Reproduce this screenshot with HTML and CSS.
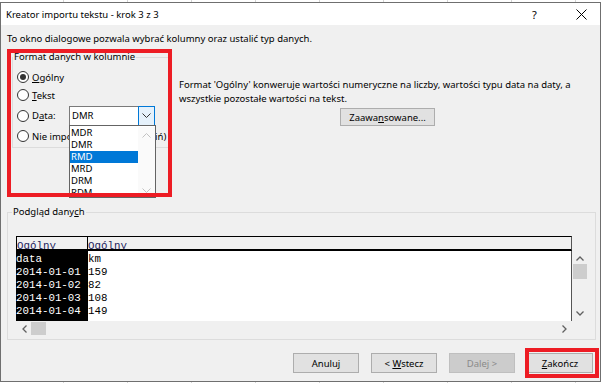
FILE: index.html
```html
<!DOCTYPE html>
<html lang="pl">
<head>
  <meta charset="UTF-8">
  <title>Kreator importu tekstu - krok 3 z 3</title>
  <link rel="stylesheet" href="styles.css">
</head>
<body>
  <div class="dialog">
    <div class="titlebar">
      <span class="title">Kreator importu tekstu - krok 3 z 3</span>
      <span class="help">?</span>
      <span class="close">
        <svg width="11" height="11" viewBox="0 0 11 11"><path d="M0.5 0.5L10.5 10.5M10.5 0.5L0.5 10.5" stroke="#000" stroke-width="1" fill="none"/></svg>
      </span>
    </div>

    <div class="content">
      <p class="intro">To okno dialogowe pozwala wybrać kolumny oraz ustalić typ danych.</p>

      <div class="top">
        <fieldset class="group format">
          <legend>Format danych w kolumnie</legend>
          <div class="row"><span class="radio on"></span><span><u>O</u>gólny</span></div>
          <div class="row"><span class="radio"></span><span><u>T</u>ekst</span></div>
          <div class="row row-data">
            <span class="radio"></span><span class="lbl-data">D<u>a</u>ta:</span>
            <div class="combo">
              <span class="combo-val">DMR</span>
              <span class="combo-btn">
                <svg width="9" height="5" viewBox="0 0 9 5"><path d="M0.5 0.5L4.5 4.5L8.5 0.5" stroke="#333" fill="none"/></svg>
              </span>
              <div class="droplist">
                <ul class="items">
                  <li>MDR</li>
                  <li>DMR</li>
                  <li class="sel">RMD</li>
                  <li>MRD</li>
                  <li>DRM</li>
                  <li>RDM</li>
                </ul>
                <div class="list-scroll">
                  <svg width="9" height="5" viewBox="0 0 9 5"><path d="M0.5 4.5L4.5 0.5L8.5 4.5" stroke="#c2c2c2" fill="none"/></svg>
                  <svg width="9" height="5" viewBox="0 0 9 5"><path d="M0.5 0.5L4.5 4.5L8.5 0.5" stroke="#c2c2c2" fill="none"/></svg>
                </div>
              </div>
            </div>
          </div>
          <div class="row"><span class="radio"></span><span>Nie importuj kolumny (pomiń)</span></div>
        </fieldset>

        <div class="info">
          <p>Format 'Ogólny' konweruje wartości numeryczne na liczby, wartości typu data na daty, a<br>wszystkie pozostałe wartości na tekst.</p>
          <button class="btn btn-adv">Zaawa<u>n</u>sowane...</button>
        </div>
      </div>

      <fieldset class="group preview">
        <legend>Podgląd dany<u>c</u>h</legend>
        <div class="sheet-wrap">
          <div class="sheet">
            <div class="sheet-head">
              <div class="hcell first">Ogólny</div>
              <div class="hcell">Ogólny</div>
            </div>
            <div class="sheet-body">
              <div class="col col-sel">
                <div>data</div>
                <div>2014-01-01</div>
                <div>2014-01-02</div>
                <div>2014-01-03</div>
                <div>2014-01-04</div>
              </div>
              <div class="col">
                <div>km</div>
                <div>159</div>
                <div>82</div>
                <div>108</div>
                <div>149</div>
              </div>
            </div>
            <div class="hscroll">
              <svg class="arr" width="5" height="8" viewBox="0 0 5 8"><path d="M4.5 0.5L1 4L4.5 7.5" stroke="#606060" stroke-width="1.3" fill="none"/></svg>
              <span class="hthumb"></span>
              <span class="spacer"></span>
              <svg class="arr" width="5" height="8" viewBox="0 0 5 8"><path d="M0.5 0.5L4 4L0.5 7.5" stroke="#606060" stroke-width="1.3" fill="none"/></svg>
            </div>
          </div>
          <div class="vscroll">
            <svg width="8" height="5" viewBox="0 0 8 5"><path d="M0.5 4.5L4 1L7.5 4.5" stroke="#606060" stroke-width="1.3" fill="none"/></svg>
            <span class="vthumb"></span>
            <span class="spacer"></span>
            <svg width="8" height="5" viewBox="0 0 8 5"><path d="M0.5 0.5L4 4L7.5 0.5" stroke="#606060" stroke-width="1.3" fill="none"/></svg>
          </div>
        </div>
      </fieldset>

      <div class="actions">
        <button class="btn">Anuluj</button>
        <button class="btn">&lt; <u>W</u>stecz</button>
        <button class="btn" disabled>Dalej &gt;</button>
        <button class="btn"><u>Z</u>akończ</button>
      </div>
    </div>

    <div class="mark mark-format"></div>
    <div class="mark mark-finish"></div>
  </div>
</body>
</html>
```

FILE: styles.css
```css
* {
  box-sizing: border-box;
}
body {
  margin: 0;
  background-color: #fff;
  background-image: linear-gradient(90deg, transparent 63px, #d4d4d4 63px);
  background-size: 64px 100%;
  font-family: "Noto Sans", "Liberation Sans", sans-serif;
  font-size: 9.5px;
  color: #000;
}
.dialog {
  position: relative;
  margin-top: 2px;
  width: 601px;
  height: 380px;
  border: 1px solid #6f6f6f;
  background: #f0f0f0;
}
.titlebar {
  height: 22px;
  background: #fff;
  display: flex;
  align-items: center;
  padding-left: 5px;
}
.title {
  flex: 1;
}
.help {
  width: 44px;
  font-size: 11px;
}
.close {
  width: 24px;
  display: flex;
}
.content {
  padding: 0 4px 0 6px;
}
.intro {
  margin: 8px 0 0;
  line-height: 12px;
}
.top {
  display: flex;
  align-items: flex-start;
  margin-top: 6px;
}
.group {
  margin: 0;
  border: 1px solid #dcdcdc;
  min-width: 0;
}
.group legend {
  line-height: 12px;
  padding: 0 1px;
}
.format {
  margin-left: 5px;
  width: 158px;
  padding: 5px 4px 2px;
}
.format legend {
  margin-left: -4px;
}
.row {
  display: flex;
  align-items: center;
  height: 18px;
  white-space: nowrap;
}
.row-data {
  height: 23px;
}
.radio {
  width: 12px;
  height: 12px;
  border: 1px solid #333;
  border-radius: 50%;
  background: #fff;
  margin-right: 3px;
  display: flex;
  flex-shrink: 0;
}
.radio.on::after {
  content: "";
  width: 6px;
  height: 6px;
  margin: auto;
  border-radius: 50%;
  background: #333;
}
.lbl-data {
  width: 37px;
}
.combo {
  position: relative;
  width: 86px;
  height: 20px;
  border: 1px solid #7a7a7a;
  background: #fff;
  display: flex;
}
.combo-val {
  flex: 1;
  padding-left: 2px;
  line-height: 18px;
}
.combo-btn {
  width: 17px;
  margin: -1px -1px -1px 0;
  border: 1px solid #0078d7;
  background: #e5f1fb;
  display: flex;
  align-items: center;
  justify-content: center;
}
.droplist {
  position: absolute;
  top: 100%;
  left: -1px;
  width: 87px;
  height: 73px;
  padding-top: 1px;
  border: 1px solid #646464;
  background: #fff;
  display: flex;
  overflow: hidden;
  z-index: 2;
}
.items {
  list-style: none;
  margin: 0;
  padding: 0;
  flex: 1;
}
.items li {
  line-height: 12px;
  padding-left: 1px;
}
.items li.sel {
  background: #0078d7;
  color: #fff;
}
.list-scroll {
  width: 17px;
  background: #fafafa;
  display: flex;
  flex-direction: column;
  align-items: center;
  justify-content: space-between;
  padding: 6px 0 4px;
}
.info {
  flex: 1;
  margin: 27px 0 0 9px;
}
.info p {
  margin: 0;
  line-height: 14px;
  white-space: nowrap;
}
.btn {
  font: inherit;
  color: #000;
  background: #e1e1e1;
  border: 1px solid #adadad;
  padding: 0;
  width: 66px;
  height: 20px;
}
.btn:disabled {
  background: #cccccc;
  border-color: #bfbfbf;
  color: #8a8a8a;
}
.btn-adv {
  display: block;
  width: 95px;
  height: 18px;
  margin: 2px auto 0;
}
.preview {
  margin-top: 58px;
  width: 589px;
  padding: 18px 8px 3px;
}
.preview legend {
  margin-left: -4px;
}
.sheet-wrap {
  display: flex;
}
.sheet {
  width: 557px;
}
.sheet-head {
  display: flex;
  height: 15px;
  border: 1px solid #000;
  border-bottom-width: 2px;
  border-right-color: #555;
  background: #f0f0f0;
}
.hcell {
  overflow: hidden;
  padding: 3px 0 0 0;
  font-family: "Liberation Mono", monospace;
  font-size: 10.8px;
  line-height: 12px;
  color: #1c1c5c;
}
.hcell.first {
  width: 71px;
  border-right: 1px solid #000;
}
.sheet-body {
  display: flex;
  height: 70px;
  background: #fff;
  border-right: 1px solid #555;
  font-family: "Liberation Mono", monospace;
  font-size: 10.8px;
  line-height: 13px;
}
.col {
  padding-top: 2px;
}
.col-sel {
  width: 72px;
  background: #000;
  color: #fff;
}
.hscroll {
  height: 15px;
  display: flex;
  align-items: center;
  padding: 0 5px 0 6px;
}
.hthumb {
  width: 15px;
  height: 13px;
  margin-left: 4px;
  background: #cdcdcd;
}
.spacer {
  flex: 1;
}
.vscroll {
  width: 14px;
  height: 70px;
  margin: 15px 0 0 1px;
  display: flex;
  flex-direction: column;
  align-items: center;
  padding: 5px 0 5px;
}
.vthumb {
  width: 14px;
  height: 15px;
  margin-top: 3px;
  background: #cdcdcd;
}
.actions {
  display: flex;
  justify-content: flex-end;
  gap: 12px;
  margin-top: 13px;
  padding-right: 3px;
}
.mark {
  position: absolute;
  border: 4px solid #ed1c24;
  z-index: 3;
}
.mark-format {
  left: 6px;
  top: 46px;
  width: 165px;
  height: 148px;
}
.mark-finish {
  left: 524px;
  top: 345px;
  width: 74px;
  height: 30px;
}
```
